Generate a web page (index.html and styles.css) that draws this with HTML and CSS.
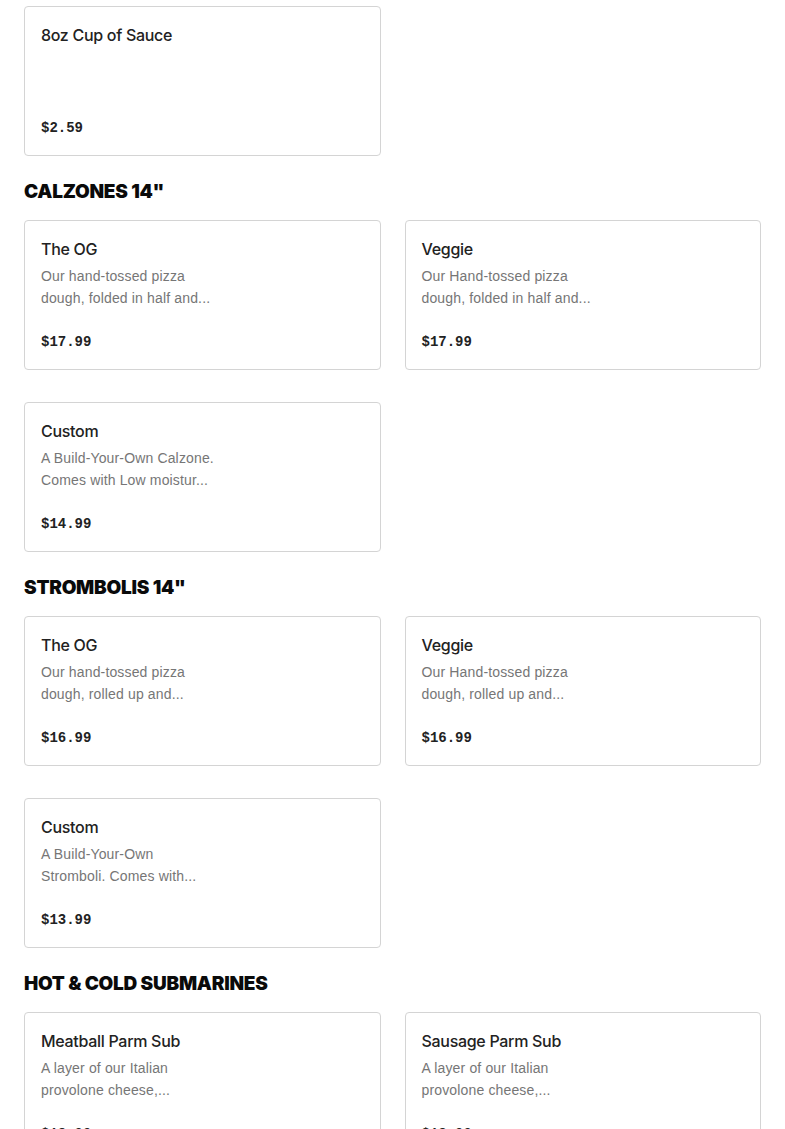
FILE: index.html
```html
<!DOCTYPE html>
<html>
<head>
<meta charset="utf-8">
<link rel="stylesheet" href="styles.css">
</head>
<body>
<main class="menu">
  <section class="section">
    <div class="grid">
      <div class="card">
        <div class="title">8oz Cup of Sauce</div>
        <div class="price">$2.59</div>
      </div>
    </div>
  </section>

  <section class="section">
    <h2 class="heading">CALZONES 14"</h2>
    <div class="grid">
      <div class="card">
        <div class="title">The OG</div>
        <div class="desc">Our hand-tossed pizza<br>dough, folded in half and...</div>
        <div class="price">$17.99</div>
      </div>
      <div class="card">
        <div class="title">Veggie</div>
        <div class="desc">Our Hand-tossed pizza<br>dough, folded in half and...</div>
        <div class="price">$17.99</div>
      </div>
      <div class="card">
        <div class="title">Custom</div>
        <div class="desc">A Build-Your-Own Calzone.<br>Comes with Low moistur...</div>
        <div class="price">$14.99</div>
      </div>
    </div>
  </section>

  <section class="section">
    <h2 class="heading">STROMBOLIS 14"</h2>
    <div class="grid">
      <div class="card">
        <div class="title">The OG</div>
        <div class="desc">Our hand-tossed pizza<br>dough, rolled up and...</div>
        <div class="price">$16.99</div>
      </div>
      <div class="card">
        <div class="title">Veggie</div>
        <div class="desc">Our Hand-tossed pizza<br>dough, rolled up and...</div>
        <div class="price">$16.99</div>
      </div>
      <div class="card">
        <div class="title">Custom</div>
        <div class="desc">A Build-Your-Own<br>Stromboli. Comes with...</div>
        <div class="price">$13.99</div>
      </div>
    </div>
  </section>

  <section class="section">
    <h2 class="heading">HOT &amp; COLD SUBMARINES</h2>
    <div class="grid">
      <div class="card">
        <div class="title">Meatball Parm Sub</div>
        <div class="desc">A layer of our Italian<br>provolone cheese,...</div>
        <div class="price">$13.99</div>
      </div>
      <div class="card">
        <div class="title">Sausage Parm Sub</div>
        <div class="desc">A layer of our Italian<br>provolone cheese,...</div>
        <div class="price">$13.99</div>
      </div>
    </div>
  </section>
</main>
</body>
</html>
```

FILE: styles.css
```css
* { box-sizing: border-box; }

html, body {
  margin: 0;
  padding: 0;
  background: #ffffff;
}

body {
  font-family: "Liberation Sans", Arial, sans-serif;
  color: #1f1f1f;
}

.menu {
  padding: 6px 24px 40px;
}

.section {
  display: flex;
  flex-direction: column;
}

.heading {
  margin: 24px 0 16px;
  font-family: Inter, "Liberation Sans", sans-serif;
  font-weight: 900;
  font-size: 19px;
  line-height: 24px;
  letter-spacing: -0.25px;
  color: #0a0a0a;
}

.grid {
  display: grid;
  grid-template-columns: 1fr 1fr;
  column-gap: 24px;
  row-gap: 32px;
}

.card {
  height: 150px;
  border: 1px solid #d4d4d4;
  border-radius: 4px;
  padding: 16px 16px 17px;
  display: flex;
  flex-direction: column;
  background: #fff;
}

.title {
  font-family: Inter, "Liberation Sans", sans-serif;
  font-size: 16px;
  line-height: 24px;
  font-weight: 500;
  letter-spacing: -0.3px;
  color: #222;
}

.desc {
  margin-top: 4px;
  font-size: 14px;
  line-height: 22px;
  letter-spacing: 0.15px;
  color: #767676;
}

.price {
  margin-top: auto;
  font-family: "Liberation Mono", "DejaVu Sans Mono", monospace;
  font-weight: bold;
  font-size: 14px;
  line-height: 20px;
  color: #222;
}
```
